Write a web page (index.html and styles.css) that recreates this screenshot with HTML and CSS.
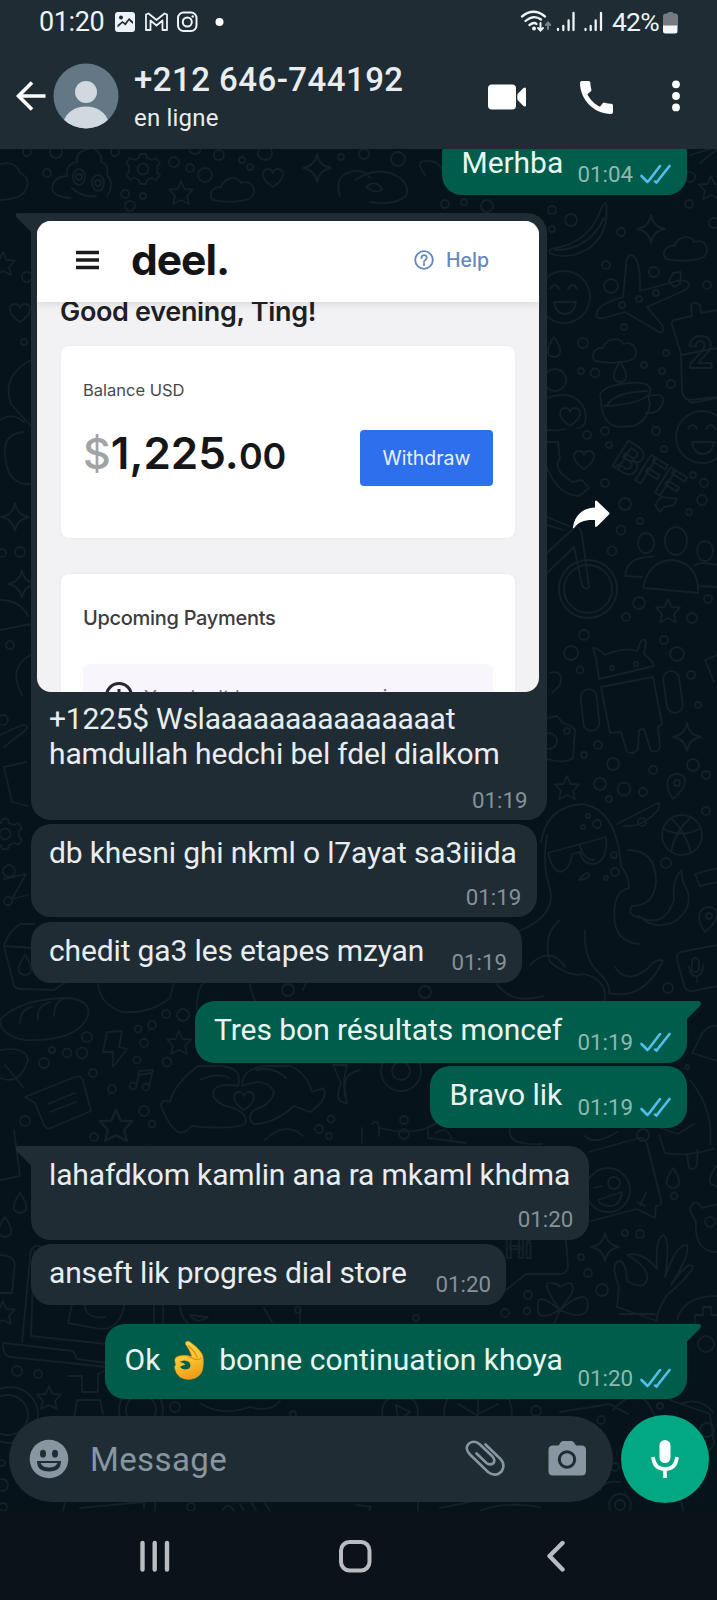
FILE: index.html
```html
<!DOCTYPE html>
<html lang="fr">
<head>
<meta charset="utf-8">
<title>Discussion</title>
<link rel="stylesheet" href="styles.css">
</head>
<body>
<header class="top">
  <div class="status">
    <span class="clock">01:20</span>
    <svg class="st-left" width="114" height="24" viewBox="0 0 114 24">
      <path fill="#edf3f6" fill-rule="evenodd" d="M4 2h14a3 3 0 0 1 3 3v14a3 3 0 0 1-3 3H4a3 3 0 0 1-3-3V5a3 3 0 0 1 3-3zM7 5.500a2 2 0 1 0 0 4a2 2 0 1 0 0-4zM3.500 17.500l5-4.500 3 2.500 3.500-5 4 3.500v-2.500l-4-3.500-4 5-2.500-2-5 4z"/>
      <path fill="none" stroke="#edf3f6" stroke-width="1.800" stroke-linejoin="round" d="M32 20V4.500l2.500-1L42.500 10l8-6.500 2.500 1V20h-4.500V10.500l-6 5-6-5V20z"/>
      <rect x="64" y="2.500" width="18.500" height="18.500" rx="5.500" fill="none" stroke="#edf3f6" stroke-width="2"/>
      <circle cx="73.300" cy="12" r="4.500" fill="none" stroke="#edf3f6" stroke-width="2"/>
      <circle cx="78.700" cy="6.500" r="1.200" fill="#edf3f6"/>
      <circle cx="105.500" cy="12" r="4" fill="#fff"/>
    </svg>
    <svg class="st-right" width="84" height="26" viewBox="0 0 84 26">
      <g fill="none" stroke="#edf3f6" stroke-width="2.300" stroke-linecap="round">
        <path d="M2 7.500q11.500-9.500 23 0M5.500 12q8-7 15.500-1.500M9.500 16q4.500-3.500 7-1"/>
        <path d="M38 20v1M43.300 17v4M48.600 11.500V21M53.500 4v17M65.500 20v1M70.700 17v4M75.700 11.500V21M81 4v17"/>
        <path stroke-width="2" d="M20.500 14v7M18 19l2.500 2.500L23 19"/>
        <path stroke="#77838a" stroke-width="2" d="M28 20v-6M25.800 16l2.200-2.500 2.200 2.500"/>
      </g>
      <circle cx="14" cy="19.500" r="2" fill="#edf3f6"/>
    </svg>
    <span class="battery">42%</span>
    <svg class="cell" width="15" height="22" viewBox="0 0 15 22">
      <path fill="#747c81" d="M4.500 1.500Q4.500 0 6 0h3q1.500 0 1.500 1.500h1.500q3 0 3 3V14H0V4.500q0-3 3-3z"/>
      <path fill="#f4f6f7" d="M0 13.500h14.500V19q0 2.500-2.500 2.500H2.500Q0 21.500 0 19z"/>
    </svg>
  </div>
  <div class="bar">
    <svg class="back" width="31" height="30" viewBox="0 0 31 30"><path fill="none" stroke="#fff" stroke-width="3.600" d="M29.500 15H3M16 1.500L2.500 15 16 28.500"/></svg>
    <svg class="avatar" width="66" height="66" viewBox="0 0 66 66">
      <clipPath id="av"><circle cx="33" cy="33" r="32.500"/></clipPath>
      <g clip-path="url(#av)"><rect width="66" height="66" fill="#647785"/><circle cx="33" cy="29" r="11" fill="#d0d9df"/><path fill="#d0d9df" d="M10 60c3-11 12-16.500 23-16.500S53 49 56 60l-6 8H16z"/></g>
    </svg>
    <div class="who"><div class="name">+212 646-744192</div><div class="online">en ligne</div></div>
    <svg class="act-video" width="39" height="26" viewBox="0 0 39 26"><rect x="0" y="0.500" width="28" height="25" rx="4" fill="#fff"/><path fill="#fff" d="M29.500 10l6-6q2.500-1.500 2.500 1v16q0 2.500-2.500 1l-6-6q-.5-3 0-6z"/></svg>
    <svg class="act-call" width="33" height="33" viewBox="3 3 18 18"><path fill="#fff" d="M20.010 15.380c-1.230 0-2.420-.2-3.530-.56a.977.977 0 0 0-1.010.24l-1.570 1.970c-2.830-1.350-5.480-3.900-6.890-6.830l1.950-1.660c.27-.28.350-.67.240-1.020-.37-1.110-.56-2.300-.56-3.530 0-.54-.45-.99-.99-.99H4.190C3.650 3 3 3.240 3 3.990 3 13.280 10.730 21 20.010 21c.71 0 .99-.63.99-1.180v-3.450c0-.54-.45-.99-.99-.99z"/></svg>
    <svg class="act-more" width="8" height="32" viewBox="0 0 8 32"><g fill="#fff"><circle cx="4" cy="4.300" r="3.900"/><circle cx="4" cy="16" r="3.900"/><circle cx="4" cy="27.400" r="3.900"/></g></svg>
  </div>
</header>

<main class="chat">
<svg class="wallpaper" width="717" height="1362" viewBox="0 149 717 1362" aria-hidden="true">
  <defs>
    <path id="star" d="M0-12L3.500-4 12-3.500 6 3 8 11 0 7-8 11-6 3-12-3.500-3.500-4z"/>
    <path id="spark" d="M0-14Q2-2 14 0Q2 2 0 14Q-2 2-14 0Q-2-2 0-14z"/>
    <path id="heart" d="M0 9C-14 0-11-9-5-9Q-1-9 0-5Q1-9 5-9C11-9 14 0 0 9z"/>
    <path id="cloud" d="M-20 10C-26 2-18-4-12-3C-8-14 6-14 8-7C20-12 26 4 16 9Q0 14-20 10z"/>
    <path id="drop" d="M0-10Q9 3 5 8Q0 12-5 8Q-9 3 0-10z"/>
    <g id="gear"><circle r="5.500"/><path d="M-3-15h6l1 4 5 2 4-2 4 5-3 3v6l3 3-4 5-4-2-5 2-1 4h-6l-1-4-5-2-4 2-4-5 3-3v-6l-3-3 4-5 4 2 5-2z"/></g>
    <g id="smile"><circle r="26"/><path d="M-14-8q5-8 9 0M4-8q5-8 9 0M-10 5H12Q10 17 1 17T-10 5z"/></g>
    <g id="pin"><path d="M-4 16C-14 2-10-9 0-9S13 2-4 16z"/><circle r="3"/></g>
  </defs>
  <g class="doodle">
    <path d="M0 164q16-4 20 9q12 6 5 18q-4 8-25 9M70 198q-22-2-17-14q4-8 14-8q-2-12 10-14q-2-12 16-14q10 6 8 14q8 2 6 13q8 8 0 21M72 188q10 10 24 8"/>
    <ellipse cx="79" cy="177" rx="6" ry="8"/><ellipse cx="98" cy="183" rx="6" ry="8"/><circle cx="79" cy="177" r="3"/><circle cx="98" cy="183" r="3"/>
    <use href="#gear" x="143" y="169"/><use href="#heart" x="273" y="178"/><use href="#spark" x="317" y="168"/><use href="#star" x="181" y="193"/><use href="#cloud" x="233" y="190"/>
    <path d="M340 196q-6-20 10-24q14-4 20 6M425 175q-12-16 5-14q10 2 12 8M355 180q24-16 45-2q10 8 6 18q-12 10-36 6M366 187q10-8 16 2q-4 6-16-2z"/>
    <path d="M690 155l27-8M700 163l17-14"/><use href="#star" x="711" y="188"/>
    <path d="M606 203q4 30-18 46q-22 12-38 4q-2-4 6-5q32-6 44-36q2-8 6-9zM555 250q34 0 49-32"/>
    <use href="#spark" x="651" y="229"/><use href="#cloud" x="686" y="249"/><use href="#cloud" x="615" y="351"/>
    <use href="#smile" x="564" y="297"/><use href="#smile" x="702" y="437"/>
    <path d="M640 291l37-10q10-2 12 3q1 4-8 8l-34 15l15 18q4 8-3 7l-34-20-21 6q-10 2-7-6q2-8 26-15l3-30q0-12 5-12q10 2 9 36zM669 281l4-8 8-1-1 12-6 3z"/>
    <path d="M717 310l-16 3-1-8q-8-5-9 1l1 10-18 4q-4 2-1 8l8 26 1 38q2 8 8 8l27-3M683 395l8 8 26-5M681 355l36-7"/>
    <text x="688" y="368" font-size="44">2</text>
    <path d="M601 401q-6-15 28-18q24-2 21 10q-10 12-46 13M601 401q1 24 18 26l14-1q14-4 17-22l-2-9M650 396q14-4 13 6q-3 12-17 11M607 405q8-13 40-14"/>
    <path d="M547 398q28-10 38 12q3 18-8 18M547 430q10 1 18-1M547 442h11l2 17q-6 6 2 15l10 8 10-2 7 8-10 8q-20 0-32-28"/>
    <use href="#heart" x="570" y="417"/><use href="#heart" x="584" y="460"/><use href="#drop" x="554" y="347"/><use href="#drop" x="620" y="372" /><circle cx="555" cy="380" r="11"/>
    <g transform="rotate(32 630 465)"><text x="613" y="475" font-size="42">BFF</text></g>
    <circle cx="588" cy="589" r="29"/><circle cx="588" cy="589" r="24"/><path d="M547 517l22 9M547 553l28-26q5-1 7 8l7 52q-4 4-7-2l-8-38-27 26M547 525l16 5"/>
    <ellipse cx="646" cy="543" rx="8" ry="10"/><ellipse cx="676" cy="541" rx="11" ry="14"/><ellipse cx="705" cy="551" rx="8" ry="10"/>
    <path d="M643 588q6-28 30-28q26 4 25 33q-30-3-55-5zM625 576q2-20 28-19M625 576l17 1M717 565q-18-4-23 1M698 586l19 1"/>
    <path d="M655 505l6-8 16 2-3 6-10 2-4 5z"/>
    <use href="#star" x="668" y="611"/><use href="#star" x="567" y="788"/><use href="#spark" x="687" y="737"/>
    <path d="M599 679l-3-21-3-10q4-1 12 7q18-8 32-4l4-10q4-3 5 1l-2 12q10 8 10 12zM601 687l52-10 9 47-4 3 2 20q-2 6-9 4l-7-22-5 1-1 19q-4 6-11 3l-6-20-11 1z"/>
    <rect x="582" y="689" width="16" height="42" rx="8" transform="rotate(-6 590 710)"/><rect x="665" y="671" width="16" height="42" rx="8" transform="rotate(-8 673 692)"/>
    <path d="M547 718l10-2 6 7 8 3 4 4-2 28q-8 6-26 1"/><circle cx="549" cy="741" r="8"/><circle cx="567" cy="731" r="3"/><path d="M717 655l-12 5 9 22M550 673q14-4 10 12l-8 8"/>
    <use href="#pin" x="677" y="783"/><circle cx="682" cy="835" r="20"/><path d="M664 829q17 9 35 0M671 818q15 14 20 35M691 817q-16 14-20 35"/>
    <path d="M541 842q6-36 42-38q34 6 38 62q8 10 8 22q-18 4-14 36q4 18 24 20M617 824l39-20q6-3 2 6q-16 18-34 16M628 850q28 0 28 32q-2 24-24 24q-6 10 10 12q12 12 32 4q18-12 14-30q-8-14-6-22q-10 8-8 30q-10 30-36 16"/>
    <path d="M548 853l58-16q2 24-12 27q-12 0-14-12l-8 2q-2 16-12 18q-8-2-12-19zM580 846q4 14 14 14M581 880q10-2 8-6t-10 6M560 920q-18 14-10 42q20 16 34 12q24 6 21 28M585 930q-2 30 16 45q10 10 8 18q34 8 54-32q-6-4-16 8q-20 16-32-2M530 965q20-20 35 2M494 980q16 26 50 16"/>
    <path d="M547 835q-5 30 2 50q10 30-30 46"/><use href="#pin" x="709" y="916"/><path d="M717 945l-36 7q-5 2-4 8l8 28q3 4 8 3l24-5M717 868l-22 6 5 12 17-4"/>
    <rect x="692" y="958" width="7" height="14" rx="3.500"/><path d="M689 967q2 10 8 9t6-11M697 977v5"/>
    <path d="M717 1026q-12-2-19 16l-6 11 25 8M690 1080q24 30 20 65M660 1128l18 6 16-10"/>
    <use href="#gear" x="5" y="834"/><path d="M4 879l22-5-14 25 16-4M4 946q4-14 16-22l14 0M4 946l28 2M4 946l10 40q4 4 10 3l30 1 12-8M98 984q2 20 24 28q28 2 48-14l4-16M197 1010q0-24 8-28M303 990q4-14 20-8M250 984q2 14 8 20"/>
    <use href="#drop" x="25" y="965"/>
    <path d="M0 1020q20-22 70-22q24 4 17 20q-12 24-62 22q-24-4-25-20zM20 1023q0-14 12-16M38 1020q-2-14 12-18M54 1016q0-14 10-18"/>
    <path d="M107 1032l15-1-3 16 8 2-14 18 0-15-10 0zM0 1050q26-4 28 10q-8 26-28 18M5 1065l18 22M25 1097l50-20q6-2 8 4l8 30-40 17q-4 2-7-3l-9-22zM48 1104l27-11M50 1112l26-10"/>
    <path d="M137 1084l2-13 14-1-4 16M139 1075l12-2"/><circle cx="133" cy="1086" r="3.500"/><circle cx="146" cy="1087" r="3.500"/>
    <path d="M170 1102q4-18 28-36h18q28 0 22 20q-24-4-25 8q2 10 20 14q16 6 12 16q-12 6-54 2q-14 20-30-20q0-8 9-4zM312 1092q-6-20-22-26h-24q-24 2-24 20q24-10 32 6q-2 12-20 18q-8 8 0 14q20 0 40-18l16 6q20-14 13-24zM200 1080q16-8 30-2M256 1070q18-4 30 8"/><use href="#heart" x="244" y="1101"/>
    <path d="M333 1065l14 0q-6 20 0 38q-14 0-6-20zM360 1070q-20 4-14 26M380 1128q40 10 60-8"/>
    <circle cx="401" cy="1071" r="20"/><circle cx="401" cy="1071" r="9"/><path d="M362 1128v15M372 1124q8-8 7 12M428 1130v8l38 5"/>
    <use href="#star" x="179" y="1043"/><g transform="translate(116 1126) scale(1.35)"><use href="#star"/></g>
    <use href="#spark" x="15" y="517"/><use href="#spark" x="22" y="584"/><use href="#star" x="3" y="264"/><use href="#heart" x="20" y="313"/>
    <path d="M31 360q-30 16-20 44l20 22M0 420q12-8 24 2M5 450q0-16 18-18M5 450q0 36 26 34M0 630l31-6M0 600q20 0 28 16M31 655q-24 12-9 40M0 735l22-10q10 0 0 8l-18 14M4 767l22-5M4 767l8 35 16 4"/>
    <path d="M0 1180l20-4-6-46M0 1255q18 0 14 16l-2 22-12 0M30 1258q0-14 10-12M30 1260l-8 82M34 1250l-3 86 75 8M3 1343l70 8 4 8 30 4M3 1343q0 14 8 14l96 10"/>
    <use href="#drop" x="20" y="1203"/><use href="#drop" x="5" y="1227"/><use href="#star" x="3" y="1313"/><use href="#star" x="49" y="1398"/>
    <path d="M68 1323l4-18q-2-22 24-24q28 4 28 26q-6 28-34 20zM85 1305q0 14 20 12M154 1305v18M163 1305v18M180 1305q0 12 8 18M190 1315q6 10 18 2zM68 1376h14v16h16v-18l8-4M74 1420l3-20h23l3 14M264 1308l8 14M300 1308v18l12 4"/>
    <circle cx="10" cy="1415" r="28"/><circle cx="8" cy="1415" r="20"/><circle cx="141" cy="1410" r="22"/><circle cx="141" cy="1410" r="15"/><circle cx="400" cy="1412" r="18"/><circle cx="478" cy="1414" r="34"/><path d="M396 1405l14 7-12 9zM478 1400v16l-20-12M478 1414l20-10M200 1403q20 14 50 4 20 6 30-6"/>
    <path d="M589 1152l50-14q6-1 8 6l14 56q2 6-5 6l-1 12-18-9-50 13"/><circle cx="608" cy="1190" r="22"/><circle cx="614" cy="1183" r="6"/><path d="M598 1200l24-8q-2 14-12 14t-12-6zM637 1202l8 4M640 1205l6-12M594 1188l8-2"/>
    <text x="505" y="1258" font-size="28">Hi</text><path d="M566 1240l2 28q-2 6-8 6h-34l-20 16"/><use href="#spark" x="605" y="1247"/>
    <path d="M560 1310q-20-28-10-27q8 0 10 4q16-10 12 6zq-24-20-22-3q-2 16 22 3q28-24 28-4q-2 16-28 4l-6 14M617 1307l2-20q-10-26 2-26q6 6 6 20q18 10 20-2t-20-24q16-4 30 14q-2-30 6-34q8 4 2 42q12-34 22-32q4 8-16 40q18-26 22-18q-4 10-26 28q-12 20-10 26zM620 1314h35"/>
    <path d="M690 1210q4-14 12-2l15-4M690 1210l6 12q-2 30 21 30"/><circle cx="710" cy="1222" r="5"/><path d="M659 1135l6 18q20 4 48-4M687 1154l2 14q10 6 8-18M677 1320q6-24 40-24M695 1325v-10h8v-8h8v8h6"/>
    <use href="#drop" x="673" y="1178"/><use href="#drop" x="716" y="1176"/>
    <path d="M560 1412l50-8 18 10M613 1410q20-22 34-8l12 20M670 1400l40 14 4 30-10 14M680 1404q20-8 33 8M600 1490q4-10 20-8M657 1495q24-10 26 16M63 1511l2-8M80 1508l64-6v6M155 1503v8M222 1511q6-10 12 0M240 1504l4 7M250 1500l6 10M265 1503l5 8M357 1505l14 2-2 4M418 1511v-8M440 1508l30-6M480 1511q20-10 60-4"/>
    <circle cx="620" cy="1505" r="11"/><circle cx="620" cy="1505" r="5"/><path d="M133 1150l14-4M265 1140q20-20 38-4M436 1133q10-8 16 6M510 1128q-4 18 32 16M585 1136q10 10 32-4M662 1480l4 20"/>
  </g>
  <g class="doodle rings" id="rings"></g>
</svg>

<section class="thread">
  <article class="msg out m-first"><p>Merhba</p><div class="meta">01:04<svg class="ticks" width="31" height="20" viewBox="0 0 31 20"><path d="M1.500 12l6 6M9 16.500L20 2M15 17.500l1.500 1L29.500 2"/></svg></div></article>

  <div class="row">
    <article class="msg in media tail">
      <div class="shot">
        <div class="deel-top">
          <svg width="23" height="20" viewBox="0 0 23 20"><path stroke="#1b1b1f" stroke-width="3.400" d="M0 2.500h23M0 10h23M0 17.500h23"/></svg>
          <b class="deel">deel.</b>
          <span class="help"><svg width="20" height="20" viewBox="0 0 20 20"><circle cx="10" cy="10" r="8.800"/><path d="M7.500 8q0-2.800 2.600-2.800T12.700 7.700q0 1.300-1.300 2.200T10 12M10 13.700v1.500"/></svg>Help</span>
        </div>
        <div class="deel-body">
          <div class="greet">Good evening, Ting!</div>
          <div class="panel balance">
            <div class="label">Balance USD</div>
            <div class="amount"><span class="sum"><i>$</i>1,225.<small>00</small></span><span class="withdraw">Withdraw</span></div>
          </div>
          <div class="panel upcoming">
            <div class="up-title">Upcoming Payments</div>
            <div class="notice"><svg width="30" height="30" viewBox="0 0 30 30"><circle cx="15" cy="15" r="12.500"/><path d="M15 8v10"/></svg><span>You don't have any upcoming</span></div>
          </div>
        </div>
      </div>
      <p><span class="tight">+1225$ Wslaaaaaaaaaaaaaaat</span><br>hamdullah hedchi bel fdel dialkom</p>
      <div class="meta">01:19</div>
    </article>
    <svg class="forward" width="38" height="30" viewBox="0 0 38 30"><path fill="#fff" d="M23 1.500Q23.500 0 25 1l12 11.500q1 1 0 2L25 26.500q-1.500 1-2-.5v-6C13 19.500 6 22 2 28q-1.500 1-1-1C3 14 12 8 23 7.500z"/></svg>
  </div>

  <article class="msg in tall m-db"><p>db khesni ghi nkml o l7ayat sa3iiida</p><div class="meta">01:19</div></article>
  <article class="msg in m-chedit"><p>chedit ga3 les etapes mzyan</p><div class="meta">01:19</div></article>
  <article class="msg out tail m-tres"><p>Tres bon résultats moncef</p><div class="meta">01:19<svg class="ticks" width="31" height="20" viewBox="0 0 31 20"><path d="M1.500 12l6 6M9 16.500L20 2M15 17.500l1.500 1L29.500 2"/></svg></div></article>
  <article class="msg out m-bravo"><p>Bravo lik</p><div class="meta">01:19<svg class="ticks" width="31" height="20" viewBox="0 0 31 20"><path d="M1.500 12l6 6M9 16.500L20 2M15 17.500l1.500 1L29.500 2"/></svg></div></article>
  <article class="msg in tall tail m-laha"><p>lahafdkom kamlin ana ra mkaml khdma</p><div class="meta">01:20</div></article>
  <article class="msg in m-anseft"><p>anseft lik progres dial store</p><div class="meta">01:20</div></article>
  <article class="msg out tail m-ok"><p>Ok <svg class="emoji" width="32" height="40" viewBox="0 0 32 40" role="img" aria-label="👌">
    <defs><linearGradient id="skin" x1="0" y1="0" x2="0.300" y2="1"><stop offset="0" stop-color="#ffd84a"/><stop offset="0.600" stop-color="#fcc32e"/><stop offset="1" stop-color="#eea01c"/></linearGradient></defs>
    <path fill="url(#skin)" stroke="#e59a25" stroke-width=".6" d="M12.500 4q0-3.500 3.500-2.500Q25 7 29 14q2 4 1 13-1 11-14 12.500Q4 39 2 29q-1-3 1-4-2-5-.5-7Q5 15 13 15.500l6 1Q17 10 12.500 4z"/>
    <path fill="#005d4b" d="M6.500 22q5-3 9.500 0 3 3.500 0 6.500-6 2.500-9-1.500 1-1.500 5-2Q12 23 6.500 22z"/>
    <path fill="none" stroke="#e08b1d" stroke-width="1.300" stroke-linecap="round" d="M14 15.500l6 3q4 2 8 0M15.500 6q6 5 8.500 11"/>
  </svg> bonne continuation khoya</p><div class="meta">01:20<svg class="ticks" width="31" height="20" viewBox="0 0 31 20"><path d="M1.500 12l6 6M9 16.500L20 2M15 17.500l1.500 1L29.500 2"/></svg></div></article>
</section>

<footer class="composer">
  <div class="field">
    <svg width="40" height="40" viewBox="0 0 40 40"><circle cx="20" cy="20" r="19.300" fill="#8796a1"/><g fill="#1f2c34"><ellipse cx="14" cy="14.700" rx="3" ry="3.900"/><ellipse cx="26" cy="14.700" rx="3" ry="3.900"/><path fill-rule="evenodd" d="M8 22h24q0 10.500-12 10.500T8 22zm3.500 2q2 4.500 8.500 4.500t8.500-4.500z"/></g></svg>
    <span>Message</span>
    <svg class="clip" width="40" height="38" viewBox="0 0 40 38"><path fill="none" stroke="#8796a1" stroke-width="2.600" stroke-linecap="round" d="M20.500 4.500l14.500 14q6 6 1.500 13-6 6-13.500.500L5 14.500Q-1 8 4 3.500q5.500-4 11 1l12.500 12q3.500 4 .5 7-3.500 2-6.500-.5L11.500 13.500"/></svg>
    <svg class="camera" width="38" height="36" viewBox="0 0 38 36"><path fill="#8796a1" d="M5 4.500h5.500l2-3Q13.500 0 15 0h8.500q1.500 0 2.500 1.500l2 3h5.500q4.500 0 4.500 4.500V30q0 4.500-4.500 4.500H5Q.5 34.500.5 30V9Q.5 4.500 5 4.500z"/><circle cx="19" cy="18.500" r="7.700" fill="#8796a1" stroke="#1f2c34" stroke-width="3"/></svg>
  </div>
  <div class="mic"><svg width="28" height="40" viewBox="0 0 28 40"><rect x="8.500" y="1" width="11" height="23" rx="5.500" fill="#fff"/><path fill="none" stroke="#fff" stroke-width="3.600" d="M2 18q1 12 12 12t12-12M14 30v9"/></svg></div>
</footer>
</main>

<nav class="nav">
  <svg width="717" height="89" viewBox="0 0 717 89"><g fill="none" stroke="#b9bdc0" stroke-width="4.400" stroke-linecap="round" stroke-linejoin="round"><path d="M142.500 32v26.500M154.700 32v26.500M167 32v26.500M562.500 32L549.500 45l13 13.500"/><rect x="341" y="31" width="28.500" height="28.500" rx="8.500" stroke-width="4"/></g></svg>
</nav>
<script src="wallpaper.js"></script>
</body>
</html>
```
FILE: styles.css
```css
* { box-sizing: border-box; }
body { margin: 0; width: 717px; height: 1600px; overflow: hidden; display: flex; flex-direction: column; background: #0b131a; font-family: Roboto, "Liberation Sans", sans-serif; color: #e9edef; }
svg { display: block; flex: none; }
p { margin: 0; white-space: nowrap; letter-spacing: -.14px; }

.top { height: 149px; flex: none; background: #1f2c34; position: relative; z-index: 2; }
.status { height: 44px; display: flex; align-items: center; padding-left: 39px; font-size: 27px; line-height: 30px; color: #edf3f6; }
.clock { width: 75px; white-space: nowrap; letter-spacing: -.4px; }
.st-left { margin-right: 292px; }
.battery { width: 52px; margin-left: 8px; margin-right: -1px; font-size: 26.500px; white-space: nowrap; letter-spacing: -.8px; }
.cell { margin-top: 1px; }
.bar { height: 104px; display: flex; align-items: center; padding-left: 16px; padding-bottom: 1px; }
.avatar { margin-left: 6px; }
.who { width: 369px; padding: 5px 0 0 15px; }
.name { font-size: 33px; font-weight: 500; line-height: 39px; letter-spacing: .45px; white-space: nowrap; }
.online { font-size: 24px; line-height: 30px; margin-top: 4px; padding-bottom: 4px; letter-spacing: .2px; }
.act-video { margin-top: 2px; }
.act-call { margin: 3px 0 0 53px; }
.act-more { margin: 1px 0 0 59px; }

.chat { height: 1362px; flex: none; position: relative; overflow: hidden; background: #07131a; display: flex; flex-direction: column; }
.wallpaper { position: absolute; left: 0; top: 0; }
.doodle { fill: none; stroke: #142128; stroke-width: 1.800; stroke-linejoin: round; stroke-linecap: round; font-family: Roboto, sans-serif; font-weight: 700; }

.thread { position: relative; display: flex; flex-direction: column; align-items: flex-start; padding-left: 30.500px; height: 1267px; flex: none; }
.msg { position: relative; height: 61.500px; border-radius: 20px; padding: 11px 15px 9px 18.500px; display: flex; justify-content: space-between; font-size: 30px; line-height: 35px; }
.in { background: #1f2c34; }
.out { background: #005d4b; align-self: flex-end; margin-right: 30px; padding-left: 19.500px; padding-right: 16px; color: #e9f5f1; }
.out p { letter-spacing: -.05px; }
.meta { align-self: flex-end; display: flex; align-items: center; font-size: 22.300px; line-height: 26px; color: #84929a; margin-bottom: -1px; }
.out .meta { color: #8fb9ae; }
.ticks { margin-left: 7px; fill: none; stroke: #53bdeb; stroke-width: 2.600; stroke-linecap: round; }
.out.tail { border-top-right-radius: 0; }
.in.tail { border-top-left-radius: 0; }
.tail::before { content: ""; position: absolute; top: 0; width: 16px; height: 20px; }
.in.tail::before { left: -15px; background: #1f2c34; clip-path: polygon(2px 0, 100% 0, 100% 100%, 1px 5px, 0 2px); }
.out.tail::before { right: -14px; background: #005d4b; clip-path: polygon(0 0, 14px 0, 16px 2px, 15px 5px, 0 100%); }

.m-first { width: 245px; margin-top: -16px; padding-top: 11.500px; }
.row { display: flex; align-items: center; margin-top: 18px; height: 607.500px; }
.media { width: 516.500px; height: 607.500px; padding: 8.500px 8px 7.500px 6.500px; display: flex; flex-direction: column; justify-content: flex-start; }
.media p { margin: 8.500px 0 0 12px; }
.tight { letter-spacing: -.25px; }
.media .meta { margin: auto 11.500px 0 0; }
.forward { margin: -3px 0 0 25px; }
.tall { height: 93.500px; flex-direction: column; padding-bottom: 8.500px; }
.tall .meta { margin-right: .8px; }
.m-db { width: 506.500px; margin-top: 3.500px; }
.m-chedit { width: 491.500px; margin-top: 4.500px; }
.m-tres { width: 492.500px; margin-top: 18px; }
.m-bravo { width: 257px; margin-top: 3.500px; }
.m-laha { width: 558.500px; margin-top: 18.500px; }
.m-anseft { width: 475.500px; margin-top: 4px; }
.m-ok { width: 582px; height: 75.500px; margin-top: 18.500px; padding-top: 18.500px; }
.m-ok p { height: 35px; letter-spacing: 0; }
.emoji { display: inline-block; vertical-align: middle; margin: -8px 6.500px -8px 5.500px; position: relative; top: -2px; }

.shot { width: 502px; height: 471px; flex: none; border-radius: 14px; overflow: hidden; background: #f2f2f5; font-family: Inter, "Liberation Sans", sans-serif; color: #202024; }
.deel-top { height: 81px; background: #fff; position: relative; display: flex; align-items: center; padding: 0 50px 4px 39px; box-shadow: 0 1px 9px rgba(0,0,0,.13); }
.deel { margin-left: 32px; font-size: 42.500px; line-height: 50px; font-weight: 700; letter-spacing: -1px; color: #141416; }
.help { margin-left: auto; display: flex; align-items: center; gap: 12px; font-size: 19.500px; font-weight: 500; color: #6388bf; line-height: 24px; }
.help svg { fill: none; stroke: #6388bf; stroke-width: 1.800; stroke-linecap: round; }
.deel-body { padding: 0 24px; }
.greet { margin: -8px 0 0 -1px; height: 52px; font-size: 27px; font-weight: 600; line-height: 35px; letter-spacing: -.33px; white-space: nowrap; }
.panel { background: #fff; border-radius: 8px; box-shadow: 0 0 3px rgba(60,60,80,.06); padding: 0 22px; }
.balance { height: 192px; padding-top: 33px; }
.label { font-size: 16.500px; line-height: 22px; color: #48484c; }
.amount { display: flex; justify-content: space-between; align-items: center; margin-top: 27px; height: 60px; font-size: 44px; font-weight: 600; line-height: 60px; color: #161618; white-space: nowrap; }
.sum { margin-top: -8px; }
.amount i { font-style: normal; font-weight: 500; color: #a2a3a6; font-size: 43px; }
.amount small { font-size: 36px; }
.withdraw { width: 133px; height: 56px; border-radius: 4px; background: #2e6fed; color: #eaf1ff; font-size: 19.500px; font-weight: 400; line-height: 56px; text-align: center; }
.upcoming { margin-top: 36px; height: 160px; padding-top: 31px; }
.up-title { font-size: 20px; font-weight: 500; line-height: 26px; letter-spacing: -.3px; color: #3c3c40; }
.notice { margin-top: 33px; background: #f8f6fc; height: 60px; border-radius: 6px; display: flex; align-items: flex-start; padding: 17px 0 0 21px; font-size: 19px; line-height: 24px; color: #77757e; white-space: nowrap; }
.notice svg { fill: none; stroke: #29272d; stroke-width: 3; }
.notice span { margin: 5px 0 0 10px; }

.composer { position: relative; display: flex; padding-left: 9px; align-items: center; height: 88px; margin-top: -1px; }
.field { width: 604px; height: 86px; border-radius: 43px; background: #1f2c34; display: flex; align-items: center; padding: 0 27px 0 20px; font-size: 33px; color: #8796a1; }
.field span { margin-left: 21px; letter-spacing: .4px; }
.clip { margin: 0 0 0 auto; }
.camera { margin-left: 43px; }
.mic { width: 88px; height: 88px; margin-left: 8px; border-radius: 50%; background: #02a884; display: flex; align-items: center; justify-content: center; }
.nav { height: 89px; background: #0b131a; }
```
FILE: wallpaper.js
```js
// Small bubbles scattered between the wallpaper drawings: [x, y, radius].
const rings = [
  [27,152,4],[56,152,6],[47,173,4],[125,194,4],[143,196,3],[174,162,5],[190,168,4],[205,175,7],[219,155,5],[242,160,3],[250,167,3],[265,153,7],[341,157,3],[115,152,4],[130,206,5],[195,148,6],
  [364,154,5],[398,159,7],[690,177,5],[445,204,4],[464,202,3],[487,206,6],[552,210,4],[571,220,6],[552,229,3],[621,232,4],[714,223,5],[689,204,4],[27,277,5],[24,342,3],
  [606,265,4],[654,272,5],[611,286,7],[707,285,4],[656,293,3],[639,299,3],[622,305,3],[624,327,3],[583,343,5],[666,353,3],[644,365,3],[581,371,3],[595,373,4.5],[662,371,3],[671,384,4],
  [587,435,4],[605,431,4],[656,431,4],[609,445,3],[664,449,3],[605,483,4],[693,475,3],[704,483,4],[702,500,5],
  [625,504,6],[640,521,3],[689,512,3],[621,530,4.5],[612,551,4.5],[639,603,6],[626,617,4],[584,635,5],[571,653,7],[580,670,3.5],[708,599,4],[692,618,5],[664,640,4],[677,654,7],[691,675,4],[698,705,3],
  [598,745,4],[584,755,3],[613,764,6],[653,770,4],[693,765,6],[706,775,4],[600,784,6],[624,789,6.5],[643,792,4],[609,799,3],[706,811,4],[612,668,2],[636,664,2],
  [20,552,5],[2,553,4],[10,645,4],[3,720,5],[588,816,2],[597,824,4],[583,827,2],[642,822,4],[614,855,3],[615,872,4],[606,878,2],[666,863,5],[668,988,5],[425,992,6],[687,1067,2],[404,1134,5],[404,1120,4],[643,1135,6],
  [9,871,6],[8,901,4],[166,1014,4],[183,1015,6],[138,1029,3.5],[152,1025,4],[87,1037,5],[144,1043,4],[52,1050,3],[67,1053,4.5],[82,1053,5.5],[44,1063,5],[137,1060,3.5],[93,1073,4],[167,1062,4.5],[112,1089,4],[144,1111,5],[152,1124,3.5],[25,1121,5],[94,1137,4],[288,990,6],[319,1129,4],[331,1119,3.5],[329,1136,3],
  [17,1371,5],[38,1374,4],[175,1407,5],[625,1233,3],[640,1234,4],[581,1257,3],[588,1273,4],[602,1290,6],[528,1295,4],[505,1313,4],[527,1311,3.5],[674,1196,3.5],[416,1318,3],[706,1344,8],[298,1310,3],
  [536,1411,5],[601,1420,4],[660,1406,3],[2,1463,3],[2,1485,6],[3,1507,4],[191,1507,4],[615,1467,4],[707,1430,7],[293,1414,3]
];
const layer = document.getElementById('rings');
for (const [cx, cy, r] of rings) {
  const c = document.createElementNS('http://www.w3.org/2000/svg', 'circle');
  c.setAttribute('cx', cx);
  c.setAttribute('cy', cy);
  c.setAttribute('r', r);
  layer.appendChild(c);
}
```
